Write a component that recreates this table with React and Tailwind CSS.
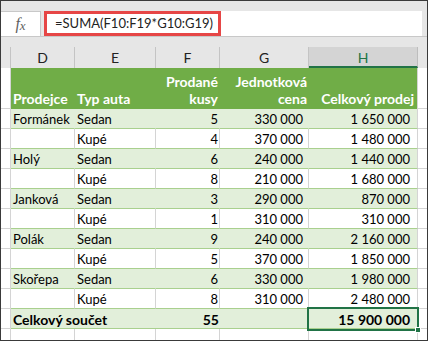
import React from "react";

const rows = [
  ["Formánek", "Sedan", "5", "330 000", "1 650 000"],
  ["", "Kupé", "4", "370 000", "1 480 000"],
  ["Holý", "Sedan", "6", "240 000", "1 440 000"],
  ["", "Kupé", "8", "210 000", "1 680 000"],
  ["Janková", "Sedan", "3", "290 000", "870 000"],
  ["", "Kupé", "1", "310 000", "310 000"],
  ["Polák", "Sedan", "9", "240 000", "2 160 000"],
  ["", "Kupé", "5", "370 000", "1 850 000"],
  ["Skořepa", "Sedan", "6", "330 000", "1 980 000"],
  ["", "Kupé", "8", "310 000", "2 480 000"],
];

function DataRow({ r, banded }) {
  const bg = banded ? "bg-[#e2efda]" : "bg-white";
  const vline = banded ? "border-r-[#e2efda]" : "border-r-[#d4d4d4]";
  return (
    <div className="flex h-[20px] leading-[17px]">
      <div className="w-[10px] shrink-0 bg-white border-r border-b border-[#d4d4d4]" />
      <div className={`w-[64px] shrink-0 ${bg} border-r border-b border-b-[#a9d08e] ${vline} pl-[2px] pt-[2px] whitespace-nowrap`}>{r[0]}</div>
      <div className={`w-[81px] shrink-0 ${bg} border-r border-b border-b-[#a9d08e] ${vline} pl-[2px] pt-[2px] whitespace-nowrap`}>{r[1]}</div>
      <div className={`w-[64px] shrink-0 ${bg} border-r border-b border-b-[#a9d08e] ${vline} pr-[1px] pt-[2px] text-right`}>{r[2]}</div>
      <div className={`w-[89px] shrink-0 ${bg} border-r border-b border-b-[#a9d08e] ${vline} pr-[5px] pt-[2px] text-right whitespace-nowrap`}>{r[3]}</div>
      <div className={`w-[109px] shrink-0 ${bg} border-r border-b border-b-[#a9d08e] border-r-[#d4d4d4] pr-[7px] pt-[2px] text-right whitespace-nowrap`}>{r[4]}</div>
      <div className="flex-1 bg-white border-b border-[#d4d4d4]" />
    </div>
  );
}

export default function App() {
  return (
    <div
      className="w-[428px] h-[341px] border border-[#3a3a3a] bg-[#e6e6e6] overflow-hidden text-[13px] text-black"
      style={{ fontFamily: "Lato, 'Open Sans', sans-serif" }}
    >
      {/* formula bar */}
      <div className="h-[36px] pt-[10px] flex border-b border-[#c8c8c8]">
        <div className="w-[40px] h-[25px] bg-white border-t border-r border-[#c8c8c8] flex items-center justify-center">
          <span
            className="italic text-[#5f5f5f] text-[16px] leading-none"
            style={{ fontFamily: "'Liberation Serif', serif" }}
          >
            f<span className="text-[13px] relative top-[1px]">x</span>
          </span>
        </div>
        <div className="ml-[3px] mr-[5px] flex-1 h-[25px] bg-white flex">
          <div className="h-[25px] w-[177px] border-[3px] border-[#e64646] pl-[8px] flex items-center text-[13px] text-[#222] whitespace-nowrap">
            =SUMA(F10:F19*G10:G19)
          </div>
        </div>
      </div>
      <div className="h-[10px]" />
      {/* column headers */}
      <div className="flex h-[21px] text-[14px] text-[#222]">
        <div className="w-[10px] shrink-0 border-r border-[#c4c4c4]" />
        <div className="w-[64px] shrink-0 border-r border-[#c4c4c4] flex items-center justify-center">D</div>
        <div className="w-[81px] shrink-0 border-r border-[#c4c4c4] flex items-center justify-center">E</div>
        <div className="w-[64px] shrink-0 border-r border-[#c4c4c4] flex items-center justify-center">F</div>
        <div className="w-[89px] shrink-0 border-r border-[#c4c4c4] flex items-center justify-center">G</div>
        <div className="w-[109px] shrink-0 bg-[#d4d4d4] border-r border-[#bdbdbd] border-b-2 border-b-[#217346] flex items-center justify-center text-[#217346] pt-[1px]">H</div>
        <div className="flex-1" />
      </div>
      {/* table header */}
      <div className="flex h-[41px] font-bold text-[14px] text-white leading-[17px]">
        <div className="w-[10px] shrink-0 bg-white border-r border-b border-[#d4d4d4]" />
        <div className="w-[64px] shrink-0 bg-[#70ad47] pl-[2px] pt-[22px] whitespace-nowrap">Prodejce</div>
        <div className="w-[81px] shrink-0 bg-[#70ad47] pl-[2px] pt-[22px] whitespace-nowrap">Typ auta</div>
        <div className="w-[64px] shrink-0 bg-[#70ad47] pr-[2px] pt-[5px] text-right">Prodané<br />kusy</div>
        <div className="w-[89px] shrink-0 bg-[#70ad47] pr-[2px] pt-[5px] text-right">Jednotková<br />cena</div>
        <div className="w-[109px] shrink-0 bg-[#70ad47] border-r border-r-[#d4d4d4] pr-[3px] pt-[22px] text-right whitespace-nowrap">Celkový prodej</div>
        <div className="flex-1 bg-white border-b border-[#d4d4d4]" />
      </div>
      {rows.map((r, i) => (
        <DataRow key={i} r={r} banded={i % 2 === 0} />
      ))}
      {/* total row */}
      <div className="flex h-[20px] font-bold text-[14px] leading-[17px]">
        <div className="w-[10px] shrink-0 bg-white border-r border-b border-[#d4d4d4]" />
        <div className="w-[64px] shrink-0 bg-[#e2efda] border-b border-[#a9d08e] pl-[2px] pt-[2px] whitespace-nowrap overflow-visible relative z-10">Celkový součet</div>
        <div className="w-[81px] shrink-0 bg-[#e2efda] border-b border-[#a9d08e]" />
        <div className="w-[64px] shrink-0 bg-[#e2efda] border-b border-[#a9d08e] pr-[1px] pt-[2px] text-right">55</div>
        <div className="w-[89px] shrink-0 bg-[#e2efda] border-b border-[#a9d08e]" />
        <div className="w-[109px] shrink-0 bg-[#e2efda] border-r border-b border-b-[#a9d08e] border-r-[#d4d4d4] pr-[7px] pt-[2px] text-right whitespace-nowrap relative">
          15 900 000
          <div className="absolute -left-[2px] -top-[2px] -right-[2px] -bottom-[3px] border-2 border-[#217346] pointer-events-none" />
          <div className="absolute -right-[4px] -bottom-[5px] w-[6px] h-[6px] bg-[#217346] border border-white" />
        </div>
        <div className="flex-1 bg-white border-b border-[#d4d4d4]" />
      </div>
      {/* empty row */}
      <div className="flex h-[11px]">
        <div className="w-[10px] shrink-0 bg-white border-r border-[#d4d4d4]" />
        <div className="w-[64px] shrink-0 bg-white border-r border-[#d4d4d4]" />
        <div className="w-[81px] shrink-0 bg-white border-r border-[#d4d4d4]" />
        <div className="w-[64px] shrink-0 bg-white border-r border-[#d4d4d4]" />
        <div className="w-[89px] shrink-0 bg-white border-r border-[#d4d4d4]" />
        <div className="w-[109px] shrink-0 bg-white border-r border-[#d4d4d4]" />
        <div className="flex-1 bg-white" />
      </div>
    </div>
  );
}
